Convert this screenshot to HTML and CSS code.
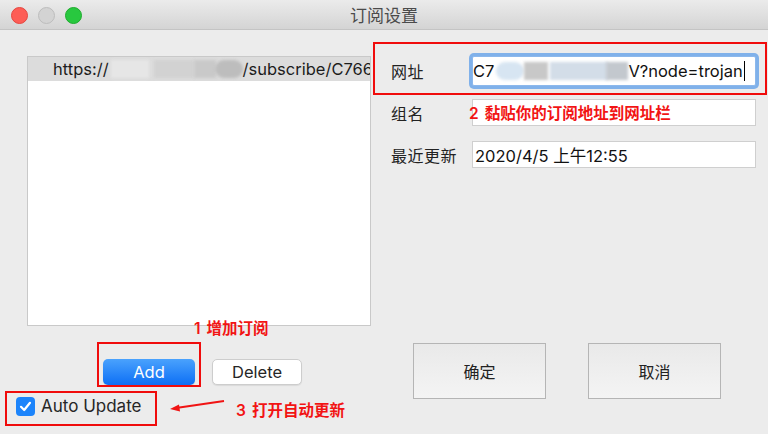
FILE: index.html
```html
<!DOCTYPE html>
<html lang="zh">
<head>
<meta charset="utf-8">
<title>订阅设置</title>
<link rel="stylesheet" href="styles.css">
</head>
<body>
<div class="window">
  <header class="titlebar">
    <div class="lights">
      <span class="light red"></span>
      <span class="light gray"></span>
      <span class="light green"></span>
    </div>
    <div class="title">订阅设置</div>
  </header>
  <main class="content">
    <section class="left">
      <div class="list">
        <div class="list-row">
          <span class="url-a">https://</span>
          <span class="smudge s-list"><i class="b1"></i><i class="b2"></i><i class="b3"></i><i class="b4"></i></span>
          <span class="url-b">/subscribe/C7668</span>
        </div>
      </div>
      <div class="btn-row">
        <button class="btn-add">Add</button>
        <button class="btn-del">Delete</button>
      </div>
      <label class="check">
        <span class="box"><svg width="19" height="19" viewBox="0 0 19 19"><path d="M5 9.8 L8.2 13 L14 5.8" fill="none" stroke="#fff" stroke-width="2.2" stroke-linecap="round" stroke-linejoin="round"/></svg></span>
        <span class="check-text">Auto Update</span>
      </label>
    </section>
    <section class="right">
      <div class="form">
        <div class="field f1">
          <span class="label">网址</span>
          <div class="input focus">
            <span class="val">C7</span>
            <span class="smudge s-url"><i class="c1"></i><i class="c2"></i><i class="c3"></i><i class="c4"></i></span>
            <span class="val">V?node=trojan</span><span class="caret"></span>
          </div>
        </div>
        <div class="field f2">
          <span class="label">组名</span>
          <div class="input"></div>
        </div>
        <div class="field f3">
          <span class="label">最近更新</span>
          <div class="input"><span class="val">2020/4/5 上午12:55</span></div>
        </div>
      </div>
      <div class="actions">
        <button class="btn-big">确定</button>
        <button class="btn-big">取消</button>
      </div>
    </section>
  </main>

  <div class="note-box nb-url"></div>
  <div class="note-box nb-add"></div>
  <div class="note-box nb-auto"></div>
  <div class="note n1"><span class="num">1</span>增加订阅</div>
  <div class="note n2"><span class="num">2</span>黏贴你的订阅地址到网址栏</div>
  <div class="note n3"><span class="num">3</span>打开自动更新</div>
  <svg class="arrow" width="60" height="16" viewBox="0 0 60 16">
    <path d="M56 2 L8 9" stroke="#f01414" stroke-width="2" fill="none"/>
    <path d="M2 10 L11 5.5 L12 12.5 Z" fill="#f01414"/>
  </svg>
</div>
</body>
</html>
```

FILE: styles.css
```css
* { box-sizing: border-box; }
html, body {
  margin: 0;
  padding: 0;
}
body {
  width: 768px;
  height: 434px;
  overflow: hidden;
  background: #ececec;
  font-family: "Inter", "Noto Sans CJK SC", sans-serif;
  color: #222;
}
.window {
  position: relative;
  width: 768px;
  height: 434px;
  background: #ececec;
}
.titlebar {
  position: relative;
  height: 30px;
  background: linear-gradient(#ebebeb, #d4d4d4);
  border-bottom: 1px solid #c4c4c4;
  display: flex;
  align-items: center;
  justify-content: center;
}
.lights {
  position: absolute;
  left: 11px;
  top: 7px;
  display: flex;
  gap: 10px;
}
.light {
  width: 17px;
  height: 17px;
  border-radius: 50%;
}
.light.red { background: #fd5d56; border: 1px solid #e5463f; }
.light.gray { background: #d3d3d3; border: 1px solid #bdbdbd; }
.light.green { background: #28c83f; border: 1px solid #1eac2d; }
.title {
  font-family: "Noto Sans CJK SC", sans-serif;
  font-size: 17px;
  color: #4b4b4b;
  line-height: 1;
}

.content {
  display: flex;
  height: 404px;
}
.left {
  width: 372px;
  display: flex;
  flex-direction: column;
}
.list {
  margin: 26px 0 0 27px;
  width: 344px;
  height: 270px;
  background: #fff;
  border: 1px solid #c9c9c9;
  overflow: hidden;
}
.list-row {
  height: 24px;
  background: #dcdcdc;
  display: flex;
  align-items: center;
  padding-left: 25px;
  font-size: 16.5px;
  white-space: nowrap;
  color: #1c1c1c;
}
.smudge {
  position: relative;
  display: inline-block;
  height: 22px;
  flex: none;
}
.smudge i {
  position: absolute;
  top: 2px;
  height: 18px;
  filter: blur(1.5px);
}
.s-list { width: 134px; }
.s-list .b1 { left: 2px; width: 38px; background: #e6e6e6; }
.s-list .b2 { left: 45px; width: 40px; background: #d2d2d2; }
.s-list .b3 { left: 85px; width: 22px; background: #c9c9c9; }
.s-list .b4 { left: 106px; width: 28px; background: #bdbdbd; border-radius: 10px; }

.btn-row {
  display: flex;
  gap: 17px;
  margin: 33px 0 0 103px;
}
button {
  font-family: "Inter", "Noto Sans CJK SC", sans-serif;
  cursor: default;
}
.btn-add {
  width: 92px;
  height: 26px;
  border: none;
  border-radius: 5px;
  background: linear-gradient(#4aa2fd, #0d6ff5);
  color: #fff;
  font-size: 16.5px;
  box-shadow: 0 1px 1px rgba(0,0,0,0.15);
  padding: 0;
}
.btn-del {
  width: 90px;
  height: 26px;
  border: 1px solid #cdcdcd;
  border-radius: 5px;
  background: #fff;
  color: #262626;
  font-size: 16.5px;
  box-shadow: 0 1px 1px rgba(0,0,0,0.08);
  padding: 0;
}
.check {
  display: flex;
  align-items: center;
  gap: 6px;
  margin: 11px 0 0 16px;
}
.box {
  width: 19px;
  height: 19px;
  border-radius: 4px;
  background: #1c84fb;
  display: flex;
}
.check-text {
  font-size: 17px;
  color: #262626;
}

.right {
  flex: 1;
  display: flex;
  flex-direction: column;
}
.form {
  margin-top: 26px;
  display: flex;
  flex-direction: column;
}
.field {
  display: flex;
  align-items: center;
}
.label {
  width: 100px;
  padding-left: 19px;
  font-family: "Noto Sans CJK SC", sans-serif;
  font-size: 16px;
  color: #222;
  letter-spacing: 0.5px;
}
.input {
  width: 284px;
  background: #fff;
  border: 1px solid #cfcfcf;
  display: flex;
  align-items: center;
  padding-left: 2px;
  font-size: 16.5px;
  white-space: nowrap;
  overflow: hidden;
  color: #111;
}
.f1 .input { height: 30px; }
.f2 { margin-top: 13px; }
.f2 .input { height: 27px; }
.f3 { margin-top: 15px; }
.f3 .input { height: 27px; }
.input.focus {
  border: 1px solid #8cb8ec;
  border-radius: 2px;
  box-shadow: 0 0 0 3px #80b1ea;
  padding-left: 0;
}
.val { font-family: "Inter", "Noto Sans CJK SC", sans-serif; flex: none; }
.s-url { width: 134px; }
.s-url .c1 { left: 2px; width: 28px; background: #d7e5f2; border-radius: 9px; }
.s-url .c2 { left: 30px; width: 24px; background: #c8c8c8; }
.s-url .c3 { left: 56px; width: 58px; background: #d3dde8; }
.s-url .c4 { left: 112px; width: 22px; background: #c3c8ce; }
.caret {
  width: 1px;
  height: 20px;
  background: #000;
  margin-left: 1px;
  flex: none;
}

.actions {
  display: flex;
  gap: 42px;
  margin: 175px 0 0 41px;
}
.btn-big {
  width: 133px;
  height: 56px;
  border: 1.5px solid #b5b5b5;
  border-radius: 0;
  background: linear-gradient(#e9e9e9, #f4f4f4);
  font-family: "Noto Sans CJK SC", sans-serif;
  font-size: 16px;
  color: #222;
  padding: 0;
}

/* annotations (overlay) */
.note-box {
  position: absolute;
  border: 2px solid #f00c0c;
}
.nb-url { left: 373px; top: 42px; width: 394px; height: 53px; }
.nb-add { left: 97px; top: 342px; width: 104px; height: 45px; }
.nb-auto { left: 5px; top: 391px; width: 152px; height: 35px; }
.note {
  position: absolute;
  font-family: "Noto Sans CJK SC", sans-serif;
  font-weight: 700;
  font-size: 15.5px;
  color: #f21414;
  white-space: nowrap;
  line-height: 1;
}
.num {
  font-family: "Inter", sans-serif;
  font-weight: 600;
  margin-right: 6px;
}
.n1 { left: 194px; top: 320px; }
.n2 { left: 469px; top: 105px; }
.n3 { left: 236px; top: 402px; }
.arrow {
  position: absolute;
  left: 168px;
  top: 399px;
}
```
